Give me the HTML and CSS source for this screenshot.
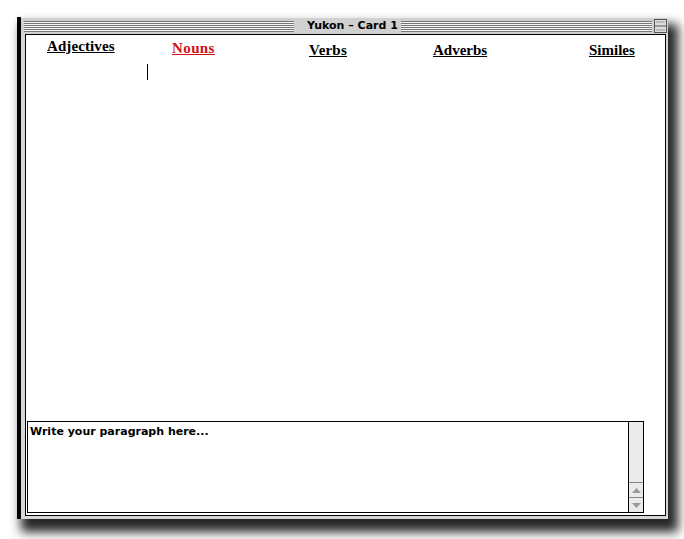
FILE: index.html
```html
<!DOCTYPE html>
<html lang="en">
<head>
    <meta charset="UTF-8">
    <title>Yukon - Card 1</title>
    <link rel="stylesheet" href="styles.css">
</head>
<body>
    <div class="window">
        <div class="titlebar">
            <div class="stripes stripes-left"></div>
            <span class="title">Yukon – Card 1</span>
            <div class="stripes"></div>
            <svg class="shade-box" width="13" height="14" viewBox="0 0 13 14">
                <rect x="0.5" y="0.5" width="12" height="13" fill="#ddd" stroke="#555"/>
                <line x1="1" y1="7" x2="12" y2="7" stroke="#555"/>
                <line x1="2" y1="3" x2="11" y2="3" stroke="#999"/>
                <line x1="2" y1="11" x2="11" y2="11" stroke="#999"/>
            </svg>
        </div>
        <div class="card">
            <div class="tabs">
                <a class="tab tab-adj">Adjectives</a>
                <a class="tab tab-nouns">Nouns</a>
                <a class="tab tab-verbs">Verbs</a>
                <a class="tab tab-adverbs">Adverbs</a>
                <a class="tab tab-similes">Similes</a>
            </div>
            <div class="cursor"></div>
            <div class="paragraph">
                <div class="para-text">Write your paragraph here...</div>
                <div class="scrollbar">
                    <div class="track"></div>
                    <div class="arrow">
                        <svg width="9" height="5" viewBox="0 0 9 5"><polygon points="0,5 9,5 4.5,0" fill="#999"/></svg>
                    </div>
                    <div class="arrow">
                        <svg width="9" height="5" viewBox="0 0 9 5"><polygon points="0,0 9,0 4.5,5" fill="#999"/></svg>
                    </div>
                </div>
            </div>
        </div>
    </div>
</body>
</html>
```

FILE: styles.css
```css
body {
    margin: 0;
    background: #fff;
    width: 684px;
    height: 539px;
    overflow: hidden;
}
.window {
    margin: 17px 0 0 17px;
    width: 647px;
    height: 502px;
    border-left: 4px solid #000;
    background: #d6d6d6;
    display: flex;
    flex-direction: column;
    box-shadow: 7px 10px 10px 3px rgba(0,0,0,0.85);
}
.titlebar {
    height: 17px;
    display: flex;
    align-items: center;
    padding: 0 1px 0 3px;
    background: #d0d0d0;
    border-top: 1px solid #eee;
    box-sizing: border-box;
}
.stripes {
    flex: 1;
    height: 11px;
    background: repeating-linear-gradient(#777 0 1px, #f4f4f4 1px 2px);
}
.stripes-left {
    flex: none;
    width: 270px;
}
.title {
    font-family: "DejaVu Sans", sans-serif;
    font-weight: bold;
    font-size: 11px;
    color: #000;
    padding: 0 3px 0 13px;
    background: #d0d0d0;
    line-height: 14px;
}
.shade-box {
    margin-left: 2px;
    display: block;
}
.card {
    flex: 1;
    margin-left: 4px;
    margin-right: 2px;
    margin-bottom: 3px;
    background: #fff;
    border: 1px solid #000;
    display: flex;
    flex-direction: column;
    padding: 0 21px 2px 1px;
}
.tabs {
    display: flex;
    align-items: flex-start;
    padding-left: 20px;
    height: 26px;
}
.tab {
    font-family: "Liberation Serif", serif;
    font-weight: bold;
    font-size: 15px;
    text-decoration: underline;
    color: #000;
    line-height: 15px;
}
.tab-adj {
    width: 125px;
    margin-top: 4px;
    letter-spacing: 0.1px;
}
.tab-nouns {
    width: 137px;
    margin-top: 6px;
    color: #d0101a;
    letter-spacing: 0.4px;
}
.tab-verbs {
    width: 124px;
    margin-top: 8px;
    letter-spacing: 0.2px;
}
.tab-adverbs {
    width: 156px;
    margin-top: 8px;
}
.tab-similes {
    margin-top: 8px;
}
.cursor {
    width: 1px;
    height: 16px;
    background: #000;
    margin: 3px 0 0 120px;
    flex: none;
}
.paragraph {
    margin-top: auto;
    height: 92px;
    border: 1px solid #000;
    display: flex;
    box-sizing: border-box;
}
.para-text {
    flex: 1;
    font-family: "DejaVu Sans", sans-serif;
    font-weight: bold;
    font-size: 11px;
    padding: 3px 0 0 2px;
    color: #000;
}
.scrollbar {
    width: 14px;
    border-left: 1px solid #000;
    background: #ebebeb;
    display: flex;
    flex-direction: column;
}
.track {
    flex: 1;
}
.arrow {
    height: 15px;
    border-top: 1px solid #888;
    display: flex;
    align-items: center;
    justify-content: center;
    box-sizing: border-box;
}
```
